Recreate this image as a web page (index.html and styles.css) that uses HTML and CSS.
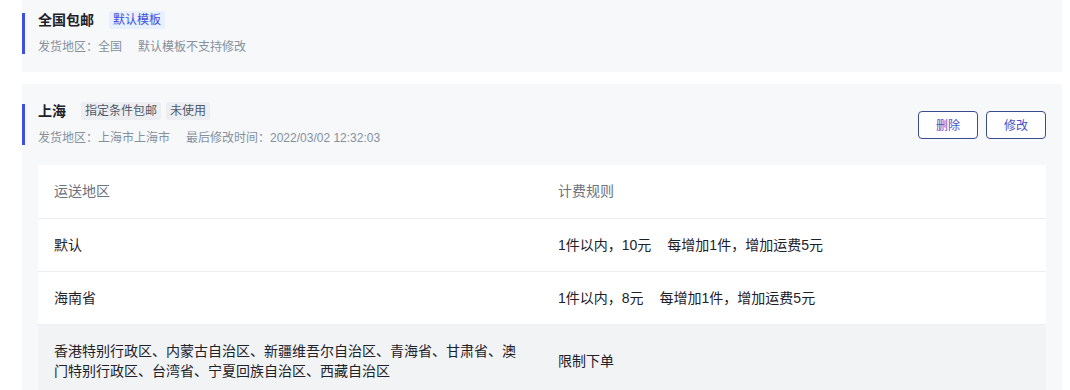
FILE: index.html
```html
<!DOCTYPE html>
<html lang="zh-CN">
<head>
<meta charset="utf-8">
<title>运费模板</title>
<link rel="stylesheet" href="styles.css">
</head>
<body>
<div class="page">
  <section class="card card-first">
    <div class="card-head">
      <div class="head-info">
        <div class="title-row">
          <span class="title">全国包邮</span>
          <span class="tag tag-blue">默认模板</span>
        </div>
        <div class="sub-row">
          <span>发货地区：全国</span>
          <span>默认模板不支持修改</span>
        </div>
      </div>
    </div>
  </section>

  <section class="card">
    <div class="card-head">
      <div class="head-info">
        <div class="title-row">
          <span class="title">上海</span>
          <span class="tags">
            <span class="tag tag-gray">指定条件包邮</span>
            <span class="tag tag-gray">未使用</span>
          </span>
        </div>
        <div class="sub-row">
          <span>发货地区：上海市上海市</span>
          <span>最后修改时间：2022/03/02 12:32:03</span>
        </div>
      </div>
      <div class="actions">
        <button class="btn">删除</button>
        <button class="btn">修改</button>
      </div>
    </div>

    <table class="table">
      <thead>
        <tr>
          <th>运送地区</th>
          <th>计费规则</th>
        </tr>
      </thead>
      <tbody>
        <tr>
          <td>默认</td>
          <td>1件以内，10元<span class="sp"></span>每增加1件，增加运费5元</td>
        </tr>
        <tr>
          <td>海南省</td>
          <td>1件以内，8元<span class="sp"></span>每增加1件，增加运费5元</td>
        </tr>
        <tr class="row-hover">
          <td>香港特别行政区、内蒙古自治区、新疆维吾尔自治区、青海省、甘肃省、澳门特别行政区、台湾省、宁夏回族自治区、西藏自治区</td>
          <td>限制下单</td>
        </tr>
      </tbody>
    </table>
  </section>
</div>
</body>
</html>
```

FILE: styles.css
```css
* {
  box-sizing: border-box;
}

html, body {
  margin: 0;
  padding: 0;
  background: #ffffff;
}

body {
  font-family: "Liberation Sans", "Noto Sans CJK SC", sans-serif;
  color: #1d2129;
  font-size: 14px;
}

.page {
  display: flex;
  flex-direction: column;
  gap: 12px;
  padding: 0 8px 0 22px;
}

.card {
  background: #f7f8fa;
  padding: 20px 16px 0 0;
  display: flex;
  flex-direction: column;
  gap: 20px;
}

.card-first {
  padding-top: 13px;
  padding-bottom: 18px;
}

.card-head {
  display: flex;
  align-items: center;
  justify-content: space-between;
}

.head-info {
  border-left: 3px solid #3d4fe0;
  padding-left: 13px;
  display: flex;
  flex-direction: column;
  gap: 13px;
}

.title-row {
  display: flex;
  align-items: center;
  height: 14px;
  gap: 15px;
}

.title {
  font-size: 14px;
  line-height: 14px;
  font-weight: 600;
  color: #1d2129;
}

.tags {
  display: flex;
  gap: 5px;
}

.tag {
  display: inline-block;
  font-size: 12px;
  line-height: 18px;
  height: 18px;
  padding: 0 4px;
  border-radius: 2px;
}

.tag-blue {
  background: #e8efff;
  color: #3f4fdc;
}

.tag-gray {
  background: #eceef2;
  color: #4e5969;
}

.sub-row {
  display: flex;
  gap: 16px;
  font-size: 12px;
  line-height: 14px;
  color: #86909c;
}

.actions {
  display: flex;
  gap: 8px;
}

.btn {
  width: 60px;
  height: 28px;
  border: 1px solid #3a4a8f;
  border-radius: 4px;
  background: #ffffff;
  color: #4a4fc9;
  font-family: inherit;
  font-size: 12px;
  padding: 0;
  cursor: pointer;
}

.table {
  margin-left: 16px;
  width: calc(100% - 16px);
  border-collapse: collapse;
  table-layout: fixed;
  background: #ffffff;
}

.table th,
.table td {
  padding: 16px;
  line-height: 20px;
  text-align: left;
  vertical-align: middle;
  font-size: 14px;
  border-bottom: 1px solid #eceef1;
}

.table th {
  line-height: 21px;
  font-weight: 400;
  color: #6b7380;
}

.table td {
  color: #1d2129;
}

.row-hover td {
  background: #f2f3f5;
  border-bottom: none;
}

.sp {
  display: inline-block;
  width: 16px;
}
```
